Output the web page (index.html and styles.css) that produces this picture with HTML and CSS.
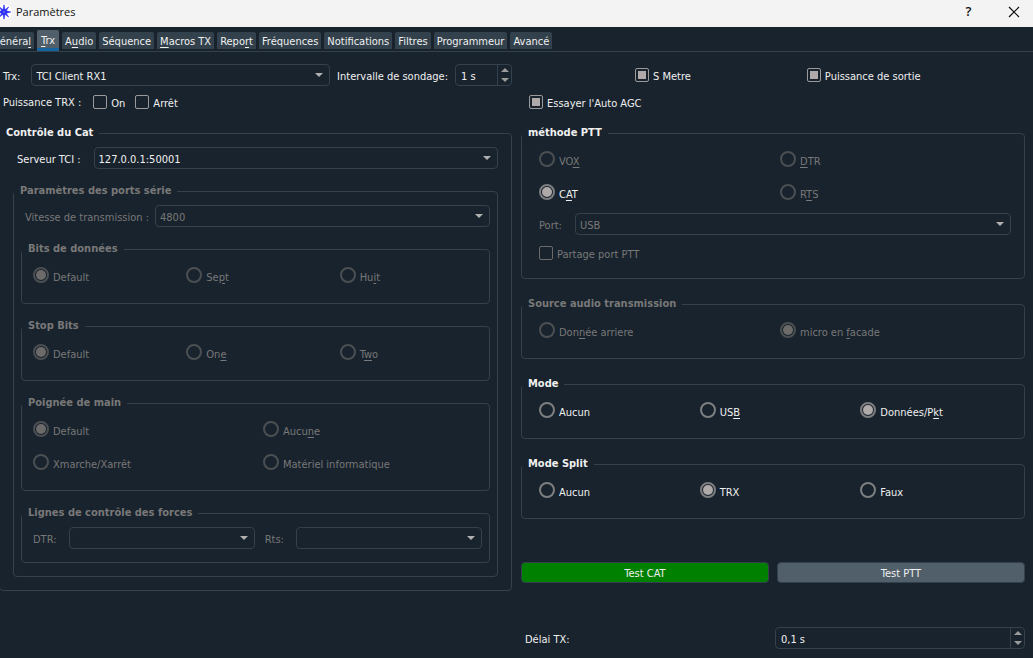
FILE: index.html
```html
<!DOCTYPE html>
<html lang="fr">
<head>
    <meta charset="UTF-8">
    <meta name="viewport" content="width=device-width, initial-scale=1.0">
    <title>Paramètres</title>
    <link rel="stylesheet" href="styles.css">
</head>
<body>
    <header class="titlebar">
        <svg class="logo" width="16" height="16" viewBox="0 0 16 16" aria-hidden="true">
            <circle cx="8" cy="8" r="8" fill="#fff"/>
            <path d="M8 0.8 L9 5.8 L12.6 3 L10.2 6.8 L14.8 8 L10.2 9.2 L12.6 13 L9 10.2 L8 15.2 L7 10.2 L3.4 13 L5.8 9.2 L1.2 8 L5.8 6.8 L3.4 3 L7 5.8 Z" fill="#2a2af0" stroke="#2a2af0" stroke-width="0.6"/>
            <circle cx="8" cy="8" r="0.8" fill="#a8aaff"/>
        </svg>
        <span class="title">Paramètres</span>
        <button type="button" class="win-btn help" aria-label="Aide">?</button>
        <button type="button" class="win-btn" aria-label="Fermer">
            <svg width="12" height="12" viewBox="0 0 12 12"><path d="M1 1 L11 11 M11 1 L1 11" stroke="#111" stroke-width="1.2" fill="none"/></svg>
        </button>
    </header>

    <nav class="tabs">
        <button type="button" class="tab">Généra<u>l</u></button>
        <button type="button" class="tab active"><u>T</u>rx</button>
        <button type="button" class="tab">A<u>u</u>dio</button>
        <button type="button" class="tab">Séquence</button>
        <button type="button" class="tab"><u>M</u>acros TX</button>
        <button type="button" class="tab">Repo<u>r</u>t</button>
        <button type="button" class="tab">Fréquences</button>
        <button type="button" class="tab">Notifications</button>
        <button type="button" class="tab">Filtres</button>
        <button type="button" class="tab">Programmeur</button>
        <button type="button" class="tab">Avancé</button>
    </nav>

    <main class="page">
        <div class="column">
            <div class="line device">
                <label class="first" for="trx">Trx:</label>
                <span class="combo"><select id="trx"><option>TCI Client RX1</option></select></span>
                <label for="poll">Intervalle de sondage:</label>
                <span class="spin spin-small">
                    <input type="text" id="poll" value="1 s">
                    <span class="steps"><button type="button" class="up" aria-label="Plus"></button><button type="button" class="down" aria-label="Moins"></button></span>
                </span>
            </div>
            <div class="line power">
                <span class="first">Puissance TRX :</span>
                <label class="choice"><input type="checkbox"><span>On</span></label>
                <label class="choice"><input type="checkbox"><span>Arrêt</span></label>
            </div>

            <fieldset class="group cat">
                <legend>Contrôle du Cat</legend>
                <div class="line server">
                    <label for="server">Serveur TCI :</label>
                    <span class="combo"><select id="server"><option>127.0.0.1:50001</option></select></span>
                </div>

                <fieldset class="group serial" disabled>
                    <legend>Paramètres des ports série</legend>
                    <div class="line speed">
                        <label for="baud">Vitesse de transmission :</label>
                        <span class="combo"><select id="baud"><option>4800</option></select></span>
                    </div>

                    <fieldset class="group radios">
                        <legend>Bits de données</legend>
                        <div class="grid three">
                            <label class="choice"><input type="radio" name="bits" checked><span>Default</span></label>
                            <label class="choice"><input type="radio" name="bits"><span>Se<u>p</u>t</span></label>
                            <label class="choice"><input type="radio" name="bits"><span>Hu<u>i</u>t</span></label>
                        </div>
                    </fieldset>

                    <fieldset class="group radios">
                        <legend>Stop Bits</legend>
                        <div class="grid three">
                            <label class="choice"><input type="radio" name="stop" checked><span>Default</span></label>
                            <label class="choice"><input type="radio" name="stop"><span>On<u>e</u></span></label>
                            <label class="choice"><input type="radio" name="stop"><span>T<u>w</u>o</span></label>
                        </div>
                    </fieldset>

                    <fieldset class="group radios">
                        <legend>Poignée de main</legend>
                        <div class="grid two">
                            <label class="choice"><input type="radio" name="hand" checked><span>Default</span></label>
                            <label class="choice"><input type="radio" name="hand"><span>Aucu<u>n</u>e</span></label>
                            <label class="choice"><input type="radio" name="hand"><span>Xmarche/Xarrêt</span></label>
                            <label class="choice"><input type="radio" name="hand"><span>Matériel informatique</span></label>
                        </div>
                    </fieldset>

                    <fieldset class="group forces">
                        <legend>Lignes de contrôle des forces</legend>
                        <div class="line">
                            <label for="dtr">DTR:</label>
                            <span class="combo"><select id="dtr"><option></option></select></span>
                            <label for="rts">Rts:</label>
                            <span class="combo"><select id="rts"><option></option></select></span>
                        </div>
                    </fieldset>
                </fieldset>
            </fieldset>
        </div>

        <div class="column right">
            <div class="line meters">
                <label class="choice"><input type="checkbox" checked><span>S Metre</span></label>
                <label class="choice"><input type="checkbox" checked><span>Puissance de sortie</span></label>
            </div>
            <div class="line agc">
                <label class="choice"><input type="checkbox" checked><span>Essayer l'Auto AGC</span></label>
            </div>

            <fieldset class="group ptt">
                <legend>méthode PTT</legend>
                <div class="grid two">
                    <label class="choice off"><input type="radio" name="ptt" disabled><span>VO<u>X</u></span></label>
                    <label class="choice off"><input type="radio" name="ptt" disabled><span><u>D</u>TR</span></label>
                    <label class="choice"><input type="radio" name="ptt" checked><span>C<u>A</u>T</span></label>
                    <label class="choice off"><input type="radio" name="ptt" disabled><span>R<u>T</u>S</span></label>
                </div>
                <div class="line port off">
                    <label for="port">Port:</label>
                    <span class="combo"><select id="port" disabled><option>USB</option></select></span>
                </div>
                <label class="choice off"><input type="checkbox" disabled><span>Partage port PTT</span></label>
            </fieldset>

            <fieldset class="group radios" disabled>
                <legend>Source audio transmission</legend>
                <div class="grid two">
                    <label class="choice"><input type="radio" name="audio"><span>Don<u>n</u>ée arriere</span></label>
                    <label class="choice"><input type="radio" name="audio" checked><span>micro en <u>f</u>acade</span></label>
                </div>
            </fieldset>

            <fieldset class="group radios">
                <legend>Mode</legend>
                <div class="grid three">
                    <label class="choice"><input type="radio" name="mode"><span>Aucun</span></label>
                    <label class="choice"><input type="radio" name="mode"><span>US<u>B</u></span></label>
                    <label class="choice"><input type="radio" name="mode" checked><span>Données/P<u>k</u>t</span></label>
                </div>
            </fieldset>

            <fieldset class="group radios">
                <legend>Mode Split</legend>
                <div class="grid three">
                    <label class="choice"><input type="radio" name="split"><span>Aucun</span></label>
                    <label class="choice"><input type="radio" name="split" checked><span>TRX</span></label>
                    <label class="choice"><input type="radio" name="split"><span>Faux</span></label>
                </div>
            </fieldset>

            <div class="tests">
                <button type="button" class="test ok">Test CAT</button>
                <button type="button" class="test">Test PTT</button>
            </div>

            <div class="delay">
                <label for="delay">Délai TX:</label>
                <span class="spin">
                    <input type="text" id="delay" value="0,1 s">
                    <span class="steps"><button type="button" class="up" aria-label="Plus"></button><button type="button" class="down" aria-label="Moins"></button></span>
                </span>
            </div>
        </div>
    </main>
</body>
</html>
```

FILE: styles.css
```css
* {
    box-sizing: border-box;
}
body {
    margin: 0;
    background-color: #19232d;
    color: #f0f0f0;
    font-family: "DejaVu Sans Condensed", "DejaVu Sans", sans-serif;
    font-size: 11px;
    line-height: 15px;
    overflow-x: hidden;
}
button, input, select {
    font: inherit;
    color: inherit;
    margin: 0;
}
u {
    text-underline-offset: 2px;
}

/* window title */
.titlebar {
    display: flex;
    align-items: center;
    height: 27px;
    padding-bottom: 4px;
    background-color: #f3f3f3;
    color: #111;
}
.logo {
    margin-left: -4px;
}
.title {
    flex: 1;
    margin-left: 4px;
    font-family: "Open Sans", sans-serif;
}
.win-btn {
    display: flex;
    align-items: center;
    justify-content: center;
    width: 51px;
    height: 23px;
    padding: 0;
    border: none;
    background: none;
}
.win-btn:last-child {
    width: 39px;
}
.help {
    font-family: "Open Sans", sans-serif;
    font-size: 13px;
    font-weight: 600;
}

/* tabs */
.tabs {
    display: flex;
    align-items: flex-end;
    gap: 3px;
    height: 25px;
    margin-left: -11px;
    padding-bottom: 2px;
    border-bottom: 1px solid #32414b;
}
.tab {
    height: 17px;
    padding: 2px 3px 0;
    border: none;
    border-radius: 2px 2px 0 0;
    background-color: #32414b;
    white-space: nowrap;
}
.tab.active {
    height: 21px;
    margin-bottom: -2px;
    padding: 2px 4px 0;
    border-bottom: 3px solid #1464a0;
    background-color: #505f69;
}

/* two columns */
.page {
    display: grid;
    grid-template-columns: 512fr 504fr;
    gap: 9px;
    padding: 12px 8px 8px 0;
}
.line {
    display: flex;
    align-items: center;
    gap: 7px;
    height: 22px;
}
.line > label[for], .delay label {
    padding-top: 2px;
}
.first {
    margin-left: 3px;
}
.device .first {
    margin-right: 4px;
}
.power, .agc {
    margin: 5px 0 13px;
}
.power {
    gap: 10px;
}
.power .first {
    margin-right: 2px;
}
.meters {
    gap: 116px;
    padding-left: 114px;
}
.agc {
    padding-left: 8px;
}

/* group boxes */
.group {
    min-width: 0;
    margin: 0;
    padding: 6px 13px 13px;
    border: 1px solid #32414b;
    border-radius: 4px;
}
.group legend {
    height: 15px;
    padding: 0 6px;
    font-weight: bold;
    line-height: 13px;
}
.group .group {
    margin-top: 15px;
}
.group:disabled, .off {
    color: #787878;
}
.cat {
    margin-left: -1px;
}
.cat > legend {
    margin-left: -13px;
}
.server {
    gap: 13px;
    padding-left: 4px;
}
.serial {
    padding: 6px 7px 13px;
}
.serial > legend {
    margin-left: -7px;
}
.speed {
    gap: 6px;
    padding-left: 4px;
}
.serial .group {
    padding: 6px 7px 13px 11px;
}
.serial .group legend {
    margin-left: -11px;
}
.serial .radios {
    padding: 6px 10px 16px 11px;
}
.forces .line {
    gap: 10px;
}
.forces label {
    margin-right: 2px;
}
.right .group {
    padding: 6px 13px 13px 17px;
}
.right .radios {
    margin-top: 18px;
    padding-bottom: 16px;
}
.right legend {
    margin-left: -17px;
}
.grid {
    display: grid;
    gap: 9px 14px;
}
.right .grid {
    column-gap: 10px;
}
.two {
    grid-template-columns: repeat(2, 1fr);
}
.three {
    grid-template-columns: repeat(3, 1fr);
}
.port {
    gap: 13px;
    margin: 9px 0 6px;
}

/* check boxes and radio buttons */
.choice {
    display: flex;
    align-items: center;
    gap: 4px;
    height: 24px;
    white-space: nowrap;
}
.choice span {
    margin-top: 2px;
}
.choice input[type="radio"] + span {
    margin-top: 4px;
}
.choice input {
    flex: none;
    display: grid;
    place-content: center;
    appearance: none;
    width: 14px;
    height: 14px;
    border: 1px solid #9a9a9a;
    border-radius: 2px;
}
.choice input:checked::before {
    content: "";
    width: 8px;
    height: 8px;
    background-color: #afa9a9;
}
.choice input[type="radio"] {
    width: 16px;
    height: 16px;
    border: 2px solid #7c7e80;
    border-radius: 50%;
}
.choice input[type="radio"]:checked::before {
    width: 10px;
    height: 10px;
    border-radius: 50%;
}
.choice input[type="radio"]:disabled {
    border-color: #4b4f52;
}
.choice input:disabled {
    border-color: #6a6a6a;
}
.choice input:disabled:checked::before {
    background-color: #6d6a6a;
}

/* drop-downs and spin boxes */
.combo {
    position: relative;
    flex: 1;
}
.combo select {
    display: block;
    appearance: none;
    width: 100%;
    height: 22px;
    padding: 2px 20px 0 4px;
    border: 1px solid #32414b;
    border-radius: 4px;
    background-color: #19232d;
    opacity: 1;
}
.combo::after {
    content: "";
    position: absolute;
    top: 9px;
    right: 7px;
    border: 4px solid transparent;
    border-top-color: #b0b0b0;
    border-bottom: none;
    pointer-events: none;
}
.spin {
    display: flex;
    height: 22px;
    border: 1px solid #32414b;
    border-radius: 4px;
}
.spin input {
    flex: 1;
    min-width: 0;
    padding: 2px 0 0 5px;
    border: none;
    background: none;
}
.spin-small {
    width: 57px;
}
.steps {
    display: flex;
    flex-direction: column;
    justify-content: space-around;
    align-items: center;
    width: 14px;
    border-left: 1px solid #32414b;
}
.steps button {
    width: 8px;
    height: 4px;
    padding: 0;
    border: 4px solid transparent;
    background: none;
}
.steps .up {
    border-top: none;
    border-bottom-color: #9a9a9a;
}
.steps .down {
    border-bottom: none;
    border-top-color: #9a9a9a;
}

/* bottom of the right column */
.tests {
    display: grid;
    grid-template-columns: repeat(2, 1fr);
    gap: 8px;
    margin-top: 43px;
}
.test {
    height: 21px;
    padding: 2px 0 0;
    border: 1px solid #32414b;
    border-radius: 4px;
    background-color: #505f69;
}
.test.ok {
    background-color: #008000;
}
.delay {
    display: grid;
    grid-template-columns: 1fr 1fr;
    align-items: center;
    margin-top: 44px;
    column-gap: 4px;
}
.delay label {
    padding-left: 4px;
}
```
